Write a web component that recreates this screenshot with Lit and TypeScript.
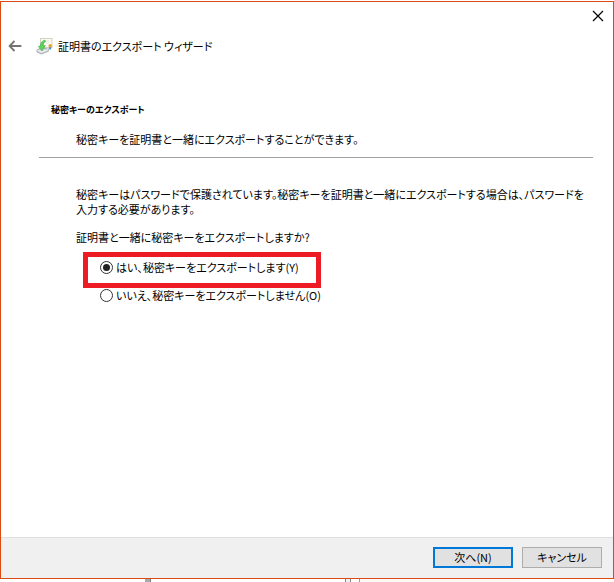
import { LitElement, html, css, svg } from "lit";
import { customElement, state } from "lit/decorators.js";

const backIcon = svg`<svg width="14" height="12" viewBox="0 0 14 12" fill="none" stroke="#737373" stroke-width="1.8" aria-hidden="true"><path d="M6.500 1 L1.600 6 L6.500 11 M1.800 6 H13.400"/></svg>`;

const closeIcon = svg`<svg width="12" height="12" viewBox="0 0 12 12" fill="none" stroke="#000" stroke-width="1.2" aria-hidden="true"><path d="M1 1 L11 11 M11 1 L1 11"/></svg>`;

const wizardIcon = svg`<svg width="18" height="18" viewBox="0 0 18 18" aria-hidden="true">
  <rect x="4.5" y="1.500" width="11.500" height="9" fill="#fbfaf5" stroke="#d3cfc2"/>
  <path d="M8.500 4h5M10 6h3" stroke="#e2dfd4" stroke-width=".8"/>
  <path d="M13.200 9l-.700 4 1.500-1 1 1 .300-4z" fill="#4f8fdc"/>
  <circle cx="14.200" cy="8.800" r="1.800" fill="#f0a32c"/>
  <path d="M1 12.800 L6 10.500 L12.300 12.300 L12.300 14.300 L5.500 17 L1 15Z" fill="#d3d6d8" stroke="#989da0" stroke-width=".8"/>
  <path d="M1.400 13.100 L5.500 15 L12 12.600" fill="none" stroke="#f7f8f9" stroke-width=".9"/>
  <path d="M9 3.200 C6 3.600 4.300 6 4.500 9 L2.400 9.300 L6 13.800 L9.400 8.600 L7.400 8.800 C7.200 6.500 7.700 5.200 9.600 4.400Z" fill="#5fd35c" stroke="#36ad3c" stroke-width=".6"/>
</svg>`;

@customElement("app-root")
export class AppRoot extends LitElement {
  static styles = css`
    :host {
      display: flex;
      flex-direction: column;
      min-height: 100vh;
      box-sizing: border-box;
      padding-top: 1px;
      background: #fff;
      color: #000;
      font: 11px/15px "Noto Sans CJK JP", sans-serif;
      font-feature-settings: "palt";
    }
    .dialog {
      flex: 1;
      display: flex;
      flex-direction: column;
      border: 1px solid #dc4a14;
      background: #fff;
    }
    .caption {
      display: flex;
      justify-content: flex-end;
      padding: 4px 5px 0 0;
    }
    button {
      font: inherit;
      font-feature-settings: inherit;
      color: inherit;
    }
    .icon-button {
      display: flex;
      align-items: center;
      justify-content: center;
      width: 20px;
      height: 20px;
      padding: 0;
      border: 0;
      background: none;
    }
    .titlebar {
      display: flex;
      align-items: center;
      padding: 10px 0 0 4px;
    }
    .titlebar svg {
      flex: none;
    }
    .logo {
      display: flex;
      margin: 0 4px 0 11px;
    }
    h1,
    h2,
    p {
      margin: 0;
      font-size: 11px;
      font-weight: 400;
    }
    .header {
      margin: 0 20px 0 38px;
      padding: 46px 0 10px 12px;
      border-bottom: 1px solid #a0a0a0;
    }
    h2 {
      font-size: 9px;
      font-weight: 700;
    }
    .header p {
      margin: 15px 0 0 25px;
    }
    .content {
      flex: 1;
      padding: 29px 24px 30px 75px;
    }
    fieldset {
      margin: 13px 0 0;
      padding: 0;
      border: 0;
    }
    legend {
      padding: 0;
    }
    .option {
      position: relative;
      display: flex;
      align-items: center;
      gap: 3px;
      width: fit-content;
      margin: 13px 0 0 24px;
    }
    .marked {
      margin-top: 15px;
    }
    .marked::before {
      content: "";
      position: absolute;
      inset: -8px auto auto -17px;
      width: 238px;
      height: 36px;
      box-sizing: border-box;
      border: 5px solid #ed1c24;
      pointer-events: none;
    }
    input {
      appearance: none;
      display: grid;
      place-items: center;
      width: 13px;
      height: 13px;
      margin: 0;
      box-sizing: border-box;
      border: 1px solid #333;
      border-radius: 50%;
      background: #fff;
    }
    input:checked::before {
      content: "";
      width: 7px;
      height: 7px;
      border-radius: 50%;
      background: #222;
    }
    .footer {
      display: flex;
      justify-content: flex-end;
      gap: 9px;
      padding: 9px 11px 10px;
      border-top: 1px solid #dfdfdf;
      background: #f0f0f0;
    }
    .action {
      width: 80px;
      height: 21px;
      padding: 0;
      border: 1px solid #adadad;
      background: #e1e1e1;
    }
    .primary {
      border: 2px solid #0078d7;
    }
    .behind {
      display: flex;
      height: 3px;
    }
    .behind i {
      box-sizing: border-box;
    }
    .scroll {
      width: 6px;
      margin-left: 145px;
      border-right: 1px solid #808080;
      background: #a9a9a9;
    }
    .splitter {
      width: 6px;
      margin-left: 194px;
      border: solid #858585;
      border-width: 0 1px;
      background: #f0f0f0;
    }
    .panel {
      width: 161px;
      margin-left: 8px;
      border-left: 1px solid #999;
      background: #fcf8f5;
    }
  `;

  @state() private exportKey = true;

  render() {
    return html`
      <main class="dialog">
        <div class="caption">
          <button class="icon-button" aria-label="閉じる">${closeIcon}</button>
        </div>
        <div class="titlebar">
          <button class="icon-button" aria-label="戻る">${backIcon}</button>
          <span class="logo">${wizardIcon}</span>
          <h1>証明書のエクスポート ウィザード</h1>
        </div>
        <header class="header">
          <h2>秘密キーのエクスポート</h2>
          <p>秘密キーを証明書と一緒にエクスポートすることができます。</p>
        </header>
        <section class="content">
          <p>
            秘密キーはパスワードで保護されています。秘密キーを証明書と一緒にエクスポートする場合は、パスワードを<br />入力する必要があります。
          </p>
          <fieldset>
            <legend>証明書と一緒に秘密キーをエクスポートしますか?</legend>
            <label class="option marked">
              <input type="radio" name="export" .checked=${this.exportKey} @change=${() => (this.exportKey = true)} />
              はい、秘密キーをエクスポートします(Y)
            </label>
            <label class="option">
              <input type="radio" name="export" .checked=${!this.exportKey} @change=${() => (this.exportKey = false)} />
              いいえ、秘密キーをエクスポートしません(O)
            </label>
          </fieldset>
        </section>
        <footer class="footer">
          <button class="action primary">次へ(N)</button>
          <button class="action">キャンセル</button>
        </footer>
      </main>
      <div class="behind" aria-hidden="true">
        <i class="scroll"></i><i class="splitter"></i><i class="panel"></i>
      </div>
    `;
  }
}
